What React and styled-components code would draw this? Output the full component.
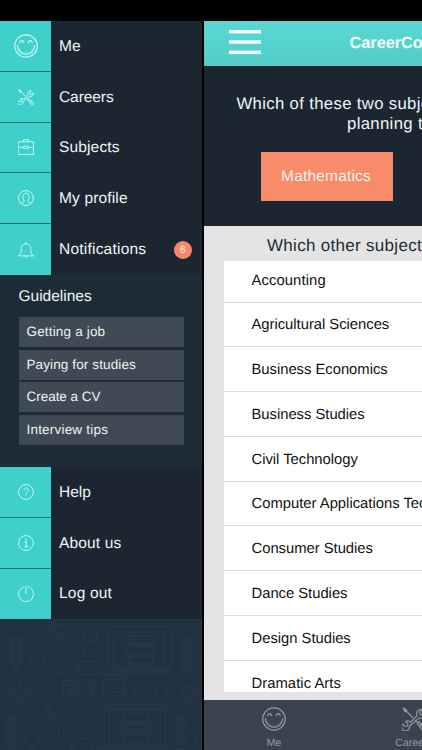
import React from "react";
import styled, { createGlobalStyle } from "styled-components";

const Global = createGlobalStyle`
  * { box-sizing: border-box; }
  html, body { margin: 0; background: #000; overflow: hidden; }
  body { font-family: "Liberation Sans", Arial, sans-serif; text-rendering: geometricPrecision; }
`;

const Screen = styled.div`
  width: 422px;
  height: 750px;
  padding-top: 21px;
  display: flex;
  background: #000;
  overflow: hidden;
`;

const Sidebar = styled.nav`
  flex: 0 0 202px;
  height: 729px;
  display: flex;
  flex-direction: column;
  background: #1e2c38;
`;

const MenuRow = styled.div`
  flex: 0 0 50.8px;
  display: flex;
  background: #1b2631;
`;

const IconCell = styled.div`
  width: 51px;
  display: flex;
  align-items: center;
  justify-content: center;
  background: #3fd0cc;
  border-bottom: ${(p) => (p.$last ? "0" : "1px")} solid #2c6f78;
  color: #c4f7f4;
`;

const MenuLabel = styled.div`
  flex: 1;
  display: flex;
  align-items: center;
  justify-content: space-between;
  padding: 1px 10px 0 8px;
  font-size: 15.5px;
  letter-spacing: ${(p) => p.$ls}px;
  color: #f0f4f7;
  white-space: nowrap;
`;

const Badge = styled.span`
  width: 18px;
  height: 18px;
  border-radius: 50%;
  background: #f48a69;
  color: #fde5dc;
  font-size: 10.5px;
  line-height: 18px;
  text-align: center;
  letter-spacing: 0;
`;

const Guidelines = styled.section`
  flex: 0 0 192px;
  padding: 13px 18px 0 18.5px;
`;

const GuideTitle = styled.h2`
  margin: 0 0 12px;
  font-size: 15.5px;
  line-height: 17px;
  font-weight: 400;
  color: #f0f4f7;
`;

const GuideList = styled.div`
  display: flex;
  flex-direction: column;
  gap: 2.3px;
`;

const GuideItem = styled.div`
  height: 30.3px;
  padding: 0 8px;
  line-height: 29px;
  background: #404a54;
  color: #eef1f3;
  font-size: 13.5px;
  letter-spacing: ${(p) => p.$ls}px;
`;

const PatternArea = styled.div`
  flex: 1;
  background: #213240;
  overflow: hidden;
  svg { display: block; }
`;

const Main = styled.main`
  flex: 0 0 218px;
  width: 218px;
  margin-left: 2px;
  height: 729px;
  display: flex;
  flex-direction: column;
  background: #e4e4e4;
  overflow: hidden;
`;

const Header = styled.header`
  flex: 0 0 44.5px;
  display: flex;
  align-items: center;
  padding-left: 25px;
  background: linear-gradient(#5bd8d3, #52cdc9);
`;

const BurgerIcon = styled.svg`
  flex: none;
  margin-top: -2px;
`;

const Brand = styled.div`
  margin-left: 88.5px;
  font-size: 16.3px;
  font-weight: 700;
  letter-spacing: 0;
  color: #f1fffe;
  white-space: nowrap;
`;

const Question = styled.section`
  flex: 0 0 160.5px;
  padding-top: 28px;
  background: #1b2631;
  color: #f0f4f7;
`;

const QuestionLine = styled.div`
  padding-left: ${(p) => p.$x}px;
  font-size: 16.7px;
  line-height: 20px;
  letter-spacing: 0.35px;
  white-space: nowrap;
`;

const Choice = styled.button`
  display: block;
  width: 132px;
  height: 49px;
  margin: 18.5px 0 0 57px;
  padding: 0 2px 0 0;
  border: 0;
  background: #f88c6a;
  color: #fff1ea;
  font: 15.5px "Liberation Sans", Arial, sans-serif;
  letter-spacing: 0.18px;
  text-rendering: inherit;
`;

const ListTitle = styled.div`
  flex: none;
  height: 34.5px;
  padding: 0 0 0 63px;
  line-height: 39px;
  font-size: 17px;
  letter-spacing: 0.3px;
  color: #222c37;
  white-space: nowrap;
`;

const SubjectList = styled.div`
  flex: 0 0 431.5px;
  margin-left: 20px;
  background: #fff;
  overflow: hidden;
`;

const Subject = styled.div`
  height: 44.8px;
  padding: 1.5px 0 0 27.5px;
  display: flex;
  align-items: center;
  border-bottom: 1px solid #dcdcdc;
  font-size: 14.8px;
  letter-spacing: ${(p) => p.$ls ?? -0.02}px;
  color: #111;
  white-space: nowrap;
  &:first-child { height: 42px; padding-top: 0; }
`;

const TabBar = styled.footer`
  flex: 1;
  margin-top: 7.5px;
  display: flex;
  background: #3b444e;
`;

const Tab = styled.div`
  flex: 0 0 140px;
  padding-top: 7.5px;
  display: flex;
  flex-direction: column;
  align-items: center;
  color: #9299a1;
  font-size: 10.5px;
  line-height: 12px;
  gap: 5.5px;
`;

const Svg = ({ size, sw = 1, children }) => (
  <svg width={size} height={size} viewBox="0 0 24 24" fill="none" stroke="currentColor" strokeWidth={sw} strokeLinecap="round" strokeLinejoin="round">
    {children}
  </svg>
);

const Burger = () => (
  <BurgerIcon width="32" height="25" viewBox="0 0 32 25" fill="#f1fffe">
    <rect y="0" width="32" height="3.5" />
    <rect y="10.3" width="32" height="3.5" />
    <rect y="20.6" width="32" height="3.5" />
  </BurgerIcon>
);

const Smile = () => (
  <Svg size={24} sw={1.25}>
    <circle cx="12" cy="12" r="11.2" />
    <path d="M3.400 11.600a8.600 8.800 0 0 0 17.200 0" />
    <path d="M5.200 14.500a7.200 7 0 0 0 13.600 0" strokeWidth="0.500" />
    <path d="M5.700 8.700c.7-2.700 3.300-2.700 4 0M14.300 8.700c.7-2.700 3.300-2.700 4 0" />
  </Svg>
);

const Tools = ({ size = 16 }) => (
  <Svg size={size} sw={size > 20 ? 1.2 : 1.45}>
    <path d="M7.4 19.8a3.9 3.9 0 1 1-6.4-2.6L3.2 19.5l2.4-.5.3-2.3-2.3-2.1a4 4 0 0 1 4.9.8L15.2 8.6a4.2 4.2 0 0 1 5-6l-2.5 2.6.5 2.5 2.5.5 2.2-2.5a4.3 4.3 0 0 1-5.6 5.2L8.9 17.7Z" />
    <path d="M1.2 1 4.6 3 5 4.8l5.7 5.7M1.2 1 2.8 4.5 4.7 4.9M3.2 2.9l1.7 1.7" />
    <path d="m13.5 13.5 1.8 1.8M15.2 16.4l1.7-1.6 6 5.4a2 2 0 0 1-2.7 2.8ZM17.8 17.4l3 3" />
  </Svg>
);

const Briefcase = () => (
  <Svg size={16} sw={1.5}>
    <path d="M.8 4.200h22.400v19H.8ZM8.500 4V1h7v3M.8 12.500h8.400M14.800 12.500h8.400M9.200 10.800h5.600v3.700H9.200Z" />
  </Svg>
);

const Profile = () => (
  <Svg size={16} sw={1.5}>
    <circle cx="12" cy="12" r="11.2" />
    <path d="M4.400 20.200c1-2 5.300-1.800 5-4.100-3.300-3.600-2.800-11.300 2.600-11.300s5.900 7.700 2.600 11.300c-.3 2.300 4 2.100 5 4.100" />
  </Svg>
);

const Bell = () => (
  <Svg size={16} sw={1.4}>
    <path d="M.8 20.500c2.500-1.800 4-3 4-7V9.500C4.800 5.300 8 2.800 12 2.800s7.200 2.500 7.200 6.700v4c0 4 1.500 5.200 4 7ZM10.600 2.600c-.7-2.600 3.500-2.600 2.800 0M9.800 20.800c.5 2.900 3.900 2.900 4.400 0" />
  </Svg>
);

const Help = () => (
  <Svg size={16} sw={1.5}>
    <circle cx="12" cy="12" r="11.2" />
    <path d="M8.800 9.200c.2-4.600 6.700-4.300 6.600-.3-.1 2.300-3.200 2.600-3.200 5.600M12.200 17.400v.4" />
  </Svg>
);

const Info = () => (
  <Svg size={16} sw={1.5}>
    <circle cx="12" cy="12" r="11.2" />
    <path d="M10.500 9.800h2v7.600M10.200 17.500h4.500M12 6v.8" strokeWidth="1.900" />
  </Svg>
);

const Power = () => (
  <Svg size={16} sw={1.5}>
    <path d="M9 1.300a11.200 11.200 0 1 0 6 0M12 .9v10" />
  </Svg>
);

const Doodles = () => (
  <g>
    <path d="M11 20h10v27H11ZM14 20v27M18 20v27M12 52h6l-3 5Z" />
    <path d="m37 12 10-6 6 5 8-6 5 7-14 10ZM40 16v4l12 8 12-9v-4M47 6l12 14M60 6 46 19" />
    <circle cx="90" cy="16" r="7" />
    <path d="m95 21 6 5-2 2-6-5M33 50c0-4-3-4-3-8a7 7 0 0 1 14 0c0 4-4 4-4 8ZM34 53h6M36 56h3M28 33l-3-3M46 33l3-3" />
    <path d="m56 56 9-18-2-6 7-6-2 7 3 2-10 19ZM79 42h17v14H79ZM79 45h-3v7h3M84 38c-4-4 3-4 0-9M90 37c-3-3 2-4 0-7" />
    <path d="M109 8h62v43h-62ZM114 13h51v35h-51ZM128 17h25v8h-25ZM127 27h28v7h-28ZM129 37h24v8h-24ZM101 53h70v3h-70Z" />
    <path d="M63 62h17v15H63ZM67 66h9M67 70h9M67 74h9M91 62l-3 8h4l-3 8 7-11h-4l3-5ZM103 61h22v16h-22ZM106 73h18M137 62c-5 0-4 9-1 10l-5 5h15l-6-5c3-2 2-10-3-10Z" />
    <path d="m161 62 3 5 6-1-4 5 3 6-7-3-6 3 1-6-4-4 6-1ZM20 64l2 6 6-3-3 5 6 2-6 2 3 5-6-3-2 6-2-6-6 3 3-5-6-2 6-2-3-5 6 3Z" />
  </g>
);

const Pattern = () => (
  <svg width="202" height="131" fill="none" stroke="#2a3a48" strokeWidth="1">
    <Doodles />
    <g transform="translate(170 0)"><Doodles /></g>
    <g transform="translate(-5 78)"><Doodles /></g>
    <g transform="translate(165 78)"><Doodles /></g>
  </svg>
);

const top = [
  ["Me", Smile, 0],
  ["Careers", Tools, -0.08],
  ["Subjects", Briefcase, 0.15],
  ["My profile", Profile, 0.15],
  ["Notifications", Bell, 0.22, 6],
];
const bottom = [["Help", Help, 0], ["About us", Info, 0.15], ["Log out", Power, 0.2]];
const guides = [["Getting a job", 0.17], ["Paying for studies", 0.12], ["Create a CV", -0.03], ["Interview tips", 0.2]];
const subjects = [
  ["Accounting", 0.1], ["Agricultural Sciences"], ["Business Economics"], ["Business Studies"],
  ["Civil Technology"], ["Computer Applications Technology", 0], ["Consumer Studies"],
  ["Dance Studies"], ["Design Studies"], ["Dramatic Arts", 0.05],
];

const Menu = ({ items }) =>
  items.map(([label, Icon, ls, count], i) => (
    <MenuRow key={label}>
      <IconCell $last={i === items.length - 1}><Icon /></IconCell>
      <MenuLabel $ls={ls}>
        {label}
        {count && <Badge>{count}</Badge>}
      </MenuLabel>
    </MenuRow>
  ));

export default function App() {
  return (
    <Screen>
      <Global />
      <Sidebar>
        <Menu items={top} />
        <Guidelines>
          <GuideTitle>Guidelines</GuideTitle>
          <GuideList>
            {guides.map(([g, ls]) => <GuideItem key={g} $ls={ls}>{g}</GuideItem>)}
          </GuideList>
        </Guidelines>
        <Menu items={bottom} />
        <PatternArea><Pattern /></PatternArea>
      </Sidebar>
      <Main>
        <Header>
          <Burger />
          <Brand>CareerConnect</Brand>
        </Header>
        <Question>
          <QuestionLine $x={32.5}>Which of these two subjects are you</QuestionLine>
          <QuestionLine $x={143}>planning to take?</QuestionLine>
          <Choice>Mathematics</Choice>
        </Question>
        <ListTitle>Which other subjects do you take?</ListTitle>
        <SubjectList>
          {subjects.map(([s, ls]) => <Subject key={s} $ls={ls}>{s}</Subject>)}
        </SubjectList>
        <TabBar>
          <Tab><Smile />Me</Tab>
          <Tab><Tools size={24} />Careers</Tab>
        </TabBar>
      </Main>
    </Screen>
  );
}
